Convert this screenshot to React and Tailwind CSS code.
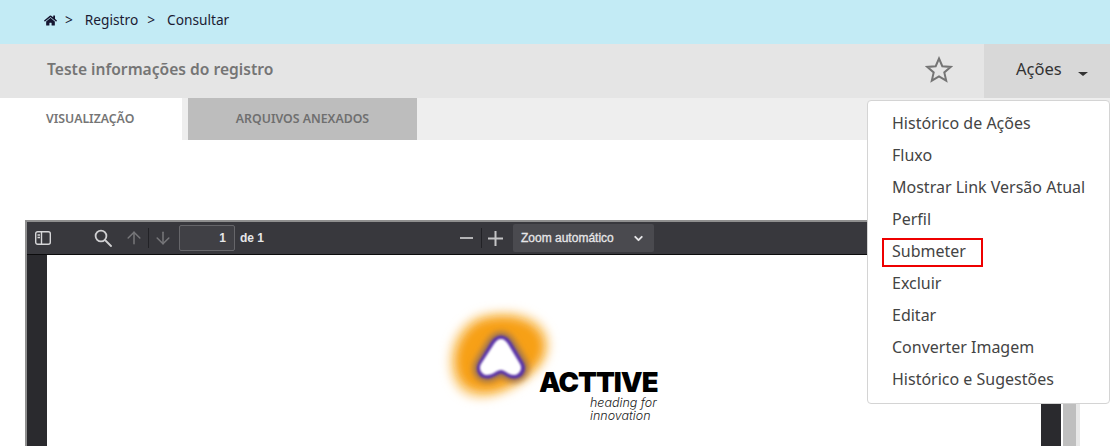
import { FaHome } from "react-icons/fa";
import { LuArrowDown, LuArrowUp, LuChevronDown } from "react-icons/lu";

const acoes = ["Histórico de Ações", "Fluxo", "Mostrar Link Versão Atual", "Perfil", "Submeter", "Excluir", "Editar", "Converter Imagem", "Histórico e Sugestões"];

const Logo = () => (
  <svg width="130" height="100" viewBox="0 0 130 100" className="block overflow-visible">
    <defs>
      <filter id="b0" x="-30%" y="-30%" width="160%" height="160%"><feGaussianBlur stdDeviation="5" /></filter>
      <filter id="b1" x="-30%" y="-30%" width="160%" height="160%"><feGaussianBlur stdDeviation="4" /></filter>
      <filter id="b2" x="-30%" y="-30%" width="160%" height="160%"><feGaussianBlur stdDeviation="3" /></filter>
      <filter id="b3" x="-30%" y="-30%" width="160%" height="160%"><feGaussianBlur stdDeviation="0.8" /></filter>
    </defs>
    <path d="M40 8C62 3 94 6 103 29C110 48 98 64 83 75C66 87 45 98 25 92C6 86 0 62 6 41C11 24 24 11 40 8Z" fill="#fcd79a" filter="url(#b0)" />
    <path d="M41 15C61 10 88 14 96 32C102 48 92 61 79 70C64 81 45 90 28 84C13 79 9 60 13 45C17 30 28 18 41 15Z" fill="#f7a012" filter="url(#b1)" />
    <path d="M56 32C60 32 63 35 65 38L77 58C81 65 76 72 69 72C63 72 60 67 56 67C52 67 48 72 42 72C35 72 31 65 35 58L47 38C49 35 52 32 56 32Z" fill="#94705a" stroke="#94705a" strokeWidth="10" filter="url(#b2)" />
    <path d="M56 32C60 32 63 35 65 38L77 58C81 65 76 72 69 72C63 72 60 67 56 67C52 67 48 72 42 72C35 72 31 65 35 58L47 38C49 35 52 32 56 32Z" fill="#5b35a8" stroke="#5b35a8" strokeWidth="3" filter="url(#b3)" />
    <path d="M56 34C59 34 61 36 63 39L75 59C78 64 74 70 69 70C63 70 60 65 56 65C52 65 48 70 42 70C37 70 33 64 36 59L49 39C51 36 53 34 56 34Z" fill="#fff" filter="url(#b3)" />
  </svg>
);

export default function App() {
  return (
    <div className="relative h-[446px] w-[1110px] overflow-hidden bg-white font-['Noto_Sans',sans-serif]">
      {/* breadcrumb */}
      <div className="flex h-11 items-center bg-[#c3ebf5] pb-[3px] pl-[44px] text-[13.7px] text-[#1b1b33]">
        <FaHome className="text-[13px] text-[#151530]" />
        <span className="ml-[8px]">&gt;</span>
        <span className="ml-[12px]">Registro</span>
        <span className="ml-[9px]">&gt;</span>
        <span className="ml-[12px]">Consultar</span>
      </div>

      {/* header */}
      <div className="flex h-[54px] items-center bg-[#e5e5e5] pl-[47px]">
        <h1 className="pb-[3px] text-[15.6px] font-semibold text-[#757575]">Teste informações do registro</h1>
        <svg width="28" height="27" viewBox="0 0 28 27" className="mb-[4px] ml-auto" fill="none" stroke="#757575" strokeWidth="2" strokeLinejoin="miter">
          <path d="M14 2.5L17.3 10.2L25.6 10.9L19.3 16.4L21.2 24.6L14 20.3L6.8 24.6L8.7 16.4L2.4 10.9L10.7 10.2Z" />
        </svg>
        <div className="ml-[31px] flex h-full w-[126px] items-center bg-[#d8d8d8] pb-[3px] pl-[32px] text-[16.5px] text-[#333]">
          Ações
          <span className="ml-[16px] mt-[9px] h-0 w-0 border-x-[5px] border-t-[4px] border-x-transparent border-t-[#333]" />
        </div>
      </div>

      {/* tabs */}
      <div className="flex h-[42px] bg-[#eeeeee]">
        <div className="flex w-[182px] items-center bg-white pl-[46px] text-[12.3px] font-semibold text-[#757575]">VISUALIZAÇÃO</div>
        <div className="ml-[6px] flex w-[229px] items-center justify-center bg-[#bdbdbd] text-[12.3px] font-semibold text-[#6f6f6f]">ARQUIVOS ANEXADOS</div>
      </div>

      {/* pdf viewer */}
      <div className="ml-[25px] mt-[80px] h-[300px] w-[1055px] border-l-2 border-t-2 border-[#8f8f8f] bg-white">
        <div className="relative flex h-[33px] items-center border-b border-[#0c0c0d] bg-[#38383d] font-['Liberation_Sans',sans-serif] text-[#b8b8ba]">
          <svg width="16" height="14" viewBox="0 0 16 14" className="ml-[8px]" fill="none" stroke="#d6d6d8" strokeWidth="1.4">
            <rect x="0.7" y="0.7" width="14.6" height="12.6" rx="2" />
            <path d="M6.5 1V13M2.5 4H5M2.5 6.5H5" />
          </svg>
          <svg width="18" height="18" viewBox="0 0 18 18" className="ml-[43px]" fill="none" stroke="#d0d0d2" strokeWidth="1.8">
            <circle cx="7" cy="7" r="5.4" />
            <path d="M11 11L17 17" strokeLinecap="round" />
          </svg>
          <LuArrowUp className="ml-[12px] text-[20px] text-[#77777a]" strokeWidth={1.8} />
          <span className="ml-[4px] h-[20px] w-px bg-[#222226]" />
          <LuArrowDown className="ml-[4px] text-[20px] text-[#77777a]" strokeWidth={1.8} />
          <div className="ml-[6px] flex h-[26px] w-[56px] items-center justify-end rounded-[2px] border border-[#66666a] bg-[#404045] pr-[8px] text-[12px] font-bold text-[#e6e6e8]">1</div>
          <span className="ml-[5px] text-[12px] font-bold text-[#e6e6e8]">de 1</span>
          <span className="ml-[196px] h-[2px] w-[13px] bg-[#b4b4b6]" />
          <span className="ml-[8px] h-[20px] w-px bg-[#222226]" />
          <svg width="15" height="15" viewBox="0 0 15 15" className="ml-[6px]" stroke="#c4c4c6" strokeWidth="2">
            <path d="M0 7.5H15M7.5 0V15" />
          </svg>
          <div className="ml-[10px] flex h-[28px] w-[141px] items-center rounded-[2px] bg-[#4a4a4f] pl-[8px] text-[12px] text-[#e6e6e8]">
            <span className="[-webkit-text-stroke:0.3px_#e6e6e8]">Zoom automático</span>
            <LuChevronDown className="ml-[18px] text-[13px]" strokeWidth={3.5} />
          </div>
        </div>
        <div className="flex h-[200px]">
          <div className="w-5 bg-[#2a2a2e]" />
          <div className="relative flex-1">
            <div className="absolute left-[398px] top-[50px]"><Logo /></div>
            <div className="absolute left-[492px] top-[114px] font-['Inter',sans-serif] text-[27.5px] font-black leading-none tracking-[-1px] text-black">ACTTIVE</div>
            <div className="absolute left-[543px] top-[142px] font-['Inter',sans-serif] text-[12.5px] font-light italic leading-[12.5px] text-[#222]">heading for<br />innovation</div>
          </div>
          <div className="w-5 bg-[#2a2a2e]" />
          <div className="ml-[2px] w-[13px] bg-[#bfbfbf]" />
          <div className="w-1 bg-[#e8e8e8]" />
        </div>
      </div>

      {/* menu */}
      <div className="absolute left-[867px] top-[100px] w-[243px] rounded-[4px] border border-[#d4d4d4] bg-white pb-[8px] pt-[6px] text-[16px] text-[#444]">
        {acoes.map((item) => (
          <div key={item} className="relative flex h-8 items-center whitespace-nowrap pl-6">
            {item}
            {item === "Submeter" && <span className="absolute left-[14px] top-[3px] h-[29px] w-[101px] border-2 border-[#ee0000]" />}
          </div>
        ))}
      </div>
    </div>
  );
}
